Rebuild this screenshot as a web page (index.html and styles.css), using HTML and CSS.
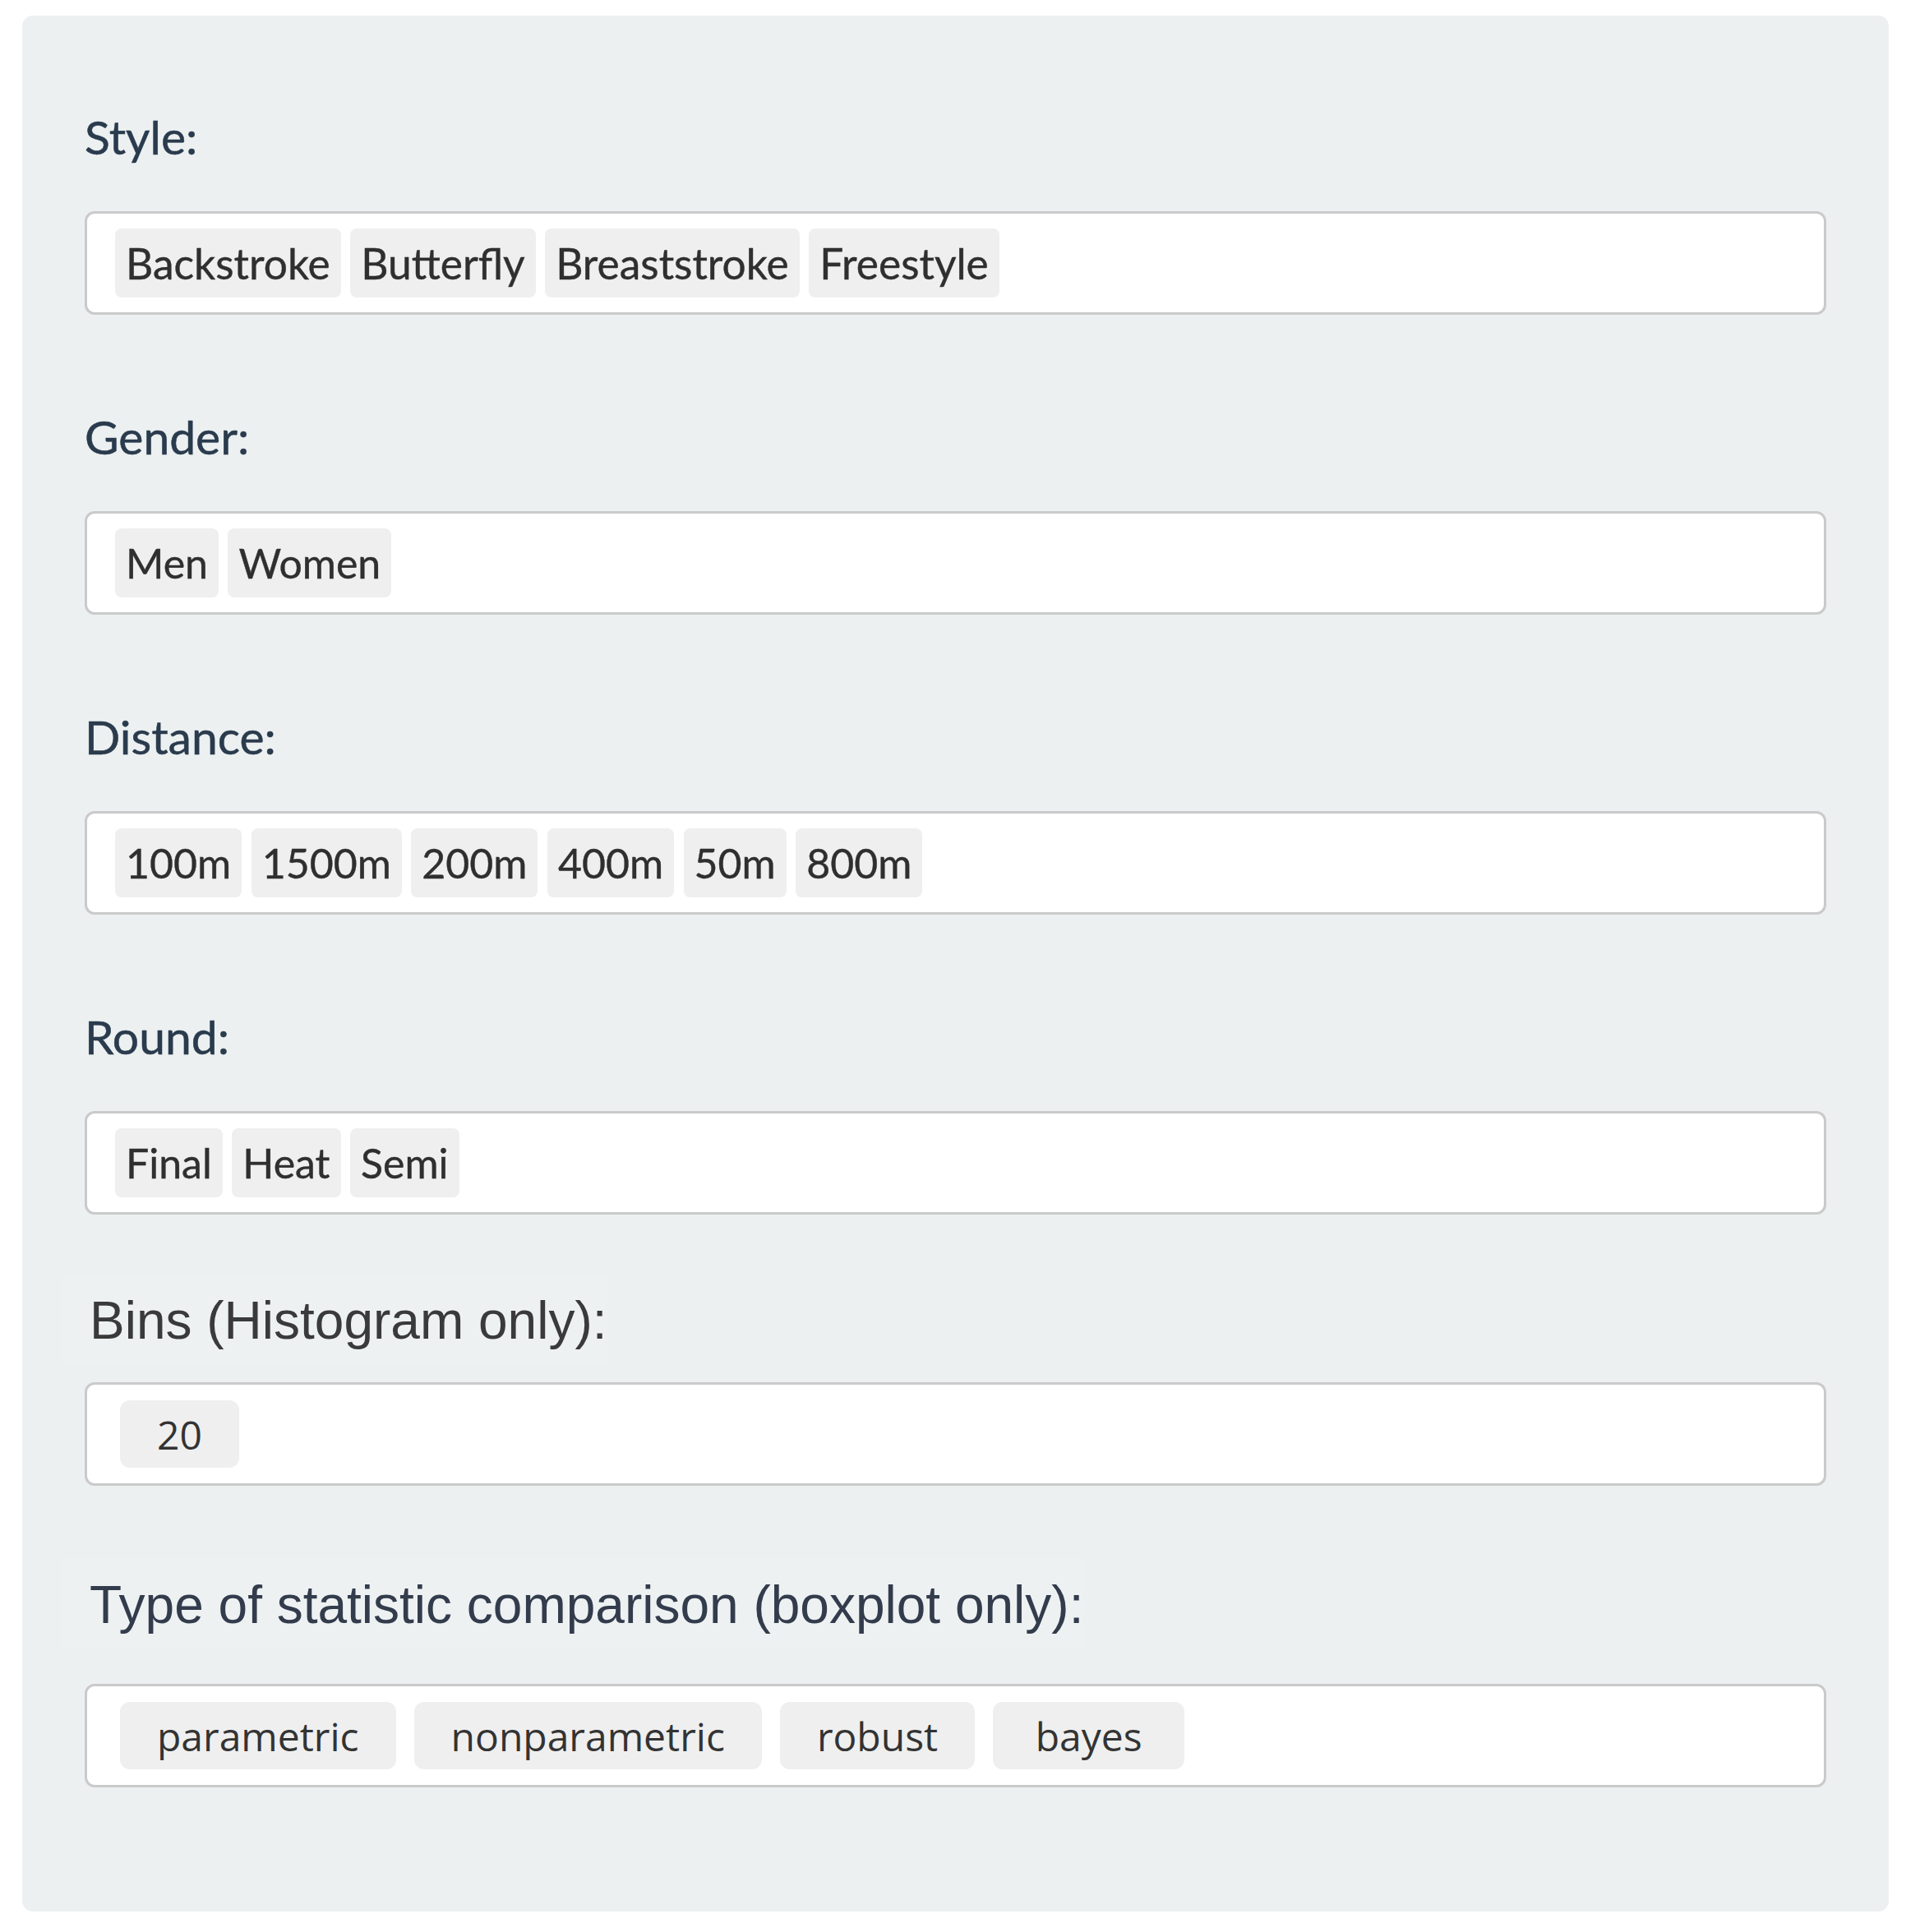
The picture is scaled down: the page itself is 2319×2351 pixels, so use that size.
FILE: index.html
```html
<!DOCTYPE html>
<html>
<head>
<meta charset="utf-8">
<link rel="stylesheet" href="styles.css">
</head>
<body>
<div class="page">
  <div class="well">
    <div class="group">
      <label class="lbl">Style:</label>
      <div class="sel">
        <span class="chip">Backstroke</span>
        <span class="chip">Butterfly</span>
        <span class="chip">Breaststroke</span>
        <span class="chip">Freestyle</span>
      </div>
    </div>
    <div class="group">
      <label class="lbl">Gender:</label>
      <div class="sel">
        <span class="chip chip-narrow">Men</span>
        <span class="chip chip-narrow">Women</span>
      </div>
    </div>
    <div class="group">
      <label class="lbl">Distance:</label>
      <div class="sel">
        <span class="chip chip-num">100m</span>
        <span class="chip chip-num">1500m</span>
        <span class="chip chip-num">200m</span>
        <span class="chip chip-num">400m</span>
        <span class="chip chip-num">50m</span>
        <span class="chip chip-num">800m</span>
      </div>
    </div>
    <div class="group group-last">
      <label class="lbl">Round:</label>
      <div class="sel">
        <span class="chip chip-narrow">Final</span>
        <span class="chip chip-narrow">Heat</span>
        <span class="chip chip-narrow">Semi</span>
      </div>
    </div>
    <div class="group-alt group-bins">
      <div class="lbl-row"><span class="lbl-alt lbl-gray">Bins (Histogram only):</span></div>
      <div class="sel sel-alt">
        <span class="chip-alt">20</span>
      </div>
    </div>
    <div class="group-alt group-type">
      <div class="lbl-row"><span class="lbl-alt lbl-blue">Type of statistic comparison (boxplot only):</span></div>
      <div class="sel sel-alt">
        <span class="chip-alt opt">parametric</span>
        <span class="chip-alt opt">nonparametric</span>
        <span class="chip-alt opt">robust</span>
        <span class="chip-alt opt">bayes</span>
      </div>
    </div>
  </div>
</div>
</body>
</html>
```
FILE: styles.css
```css
html, body {
  margin: 0;
  padding: 0;
  background: #ffffff;
}

.page {
  padding: 19px 21px 24px 27px;
}

.well {
  background: #ecf0f1;
  border-radius: 13px;
  padding: 107px 76px 151px 76px;
}

.group {
  margin-bottom: 108px;
}

.group-last {
  margin-bottom: 72px;
}

.lbl {
  display: block;
  font-family: Lato, "Liberation Sans", sans-serif;
  font-size: 57px;
  line-height: 80px;
  height: 80px;
  color: #2a3b4d;
  -webkit-text-stroke: 0.5px #2a3b4d;
  margin-bottom: 51px;
}

.sel {
  box-sizing: border-box;
  height: 126px;
  background: #ffffff;
  border: 3px solid #cacaca;
  border-radius: 12px;
  display: flex;
  align-items: center;
  gap: 11.5px;
  padding: 0 34px;
}

.chip {
  box-sizing: border-box;
  height: 84px;
  display: flex;
  align-items: center;
  padding: 0 13px;
  background: #efefef;
  border-radius: 8px;
  font-family: Lato, "Liberation Sans", sans-serif;
  font-size: 51.5px;
  color: #2f2f2f;
  -webkit-text-stroke: 0.4px #2f2f2f;
  white-space: nowrap;
}

.chip-narrow {
  font-size: 50px;
}

.chip-num {
  font-size: 50px;
}

.group-bins .lbl-row {
  margin-bottom: 22px;
}

.group-type {
  margin-top: 88px;
}

.group-type .lbl-row {
  margin-bottom: 43px;
}

.lbl-row {
  margin-left: -28px;
}

.lbl-alt {
  display: inline-block;
  font-family: "Liberation Sans", Arial, sans-serif;
  font-size: 64px;
  line-height: 80px;
  padding: 17px 0 13px 34px;
  background: #edf1f2;
}

.lbl-gray {
  color: #3a3a3a;
}

.lbl-blue {
  color: #333c4c;
}

.sel-alt {
  padding: 0 40px;
  gap: 22px;
}

.chip-alt {
  box-sizing: border-box;
  height: 82px;
  display: flex;
  align-items: center;
  justify-content: center;
  padding: 0 45px;
  background: #efefef;
  border-radius: 12px;
  font-family: "Open Sans", "Noto Sans", sans-serif;
  font-size: 48px;
  color: #333333;
  white-space: nowrap;
}

.opt {
  min-width: 233px;
}
```
